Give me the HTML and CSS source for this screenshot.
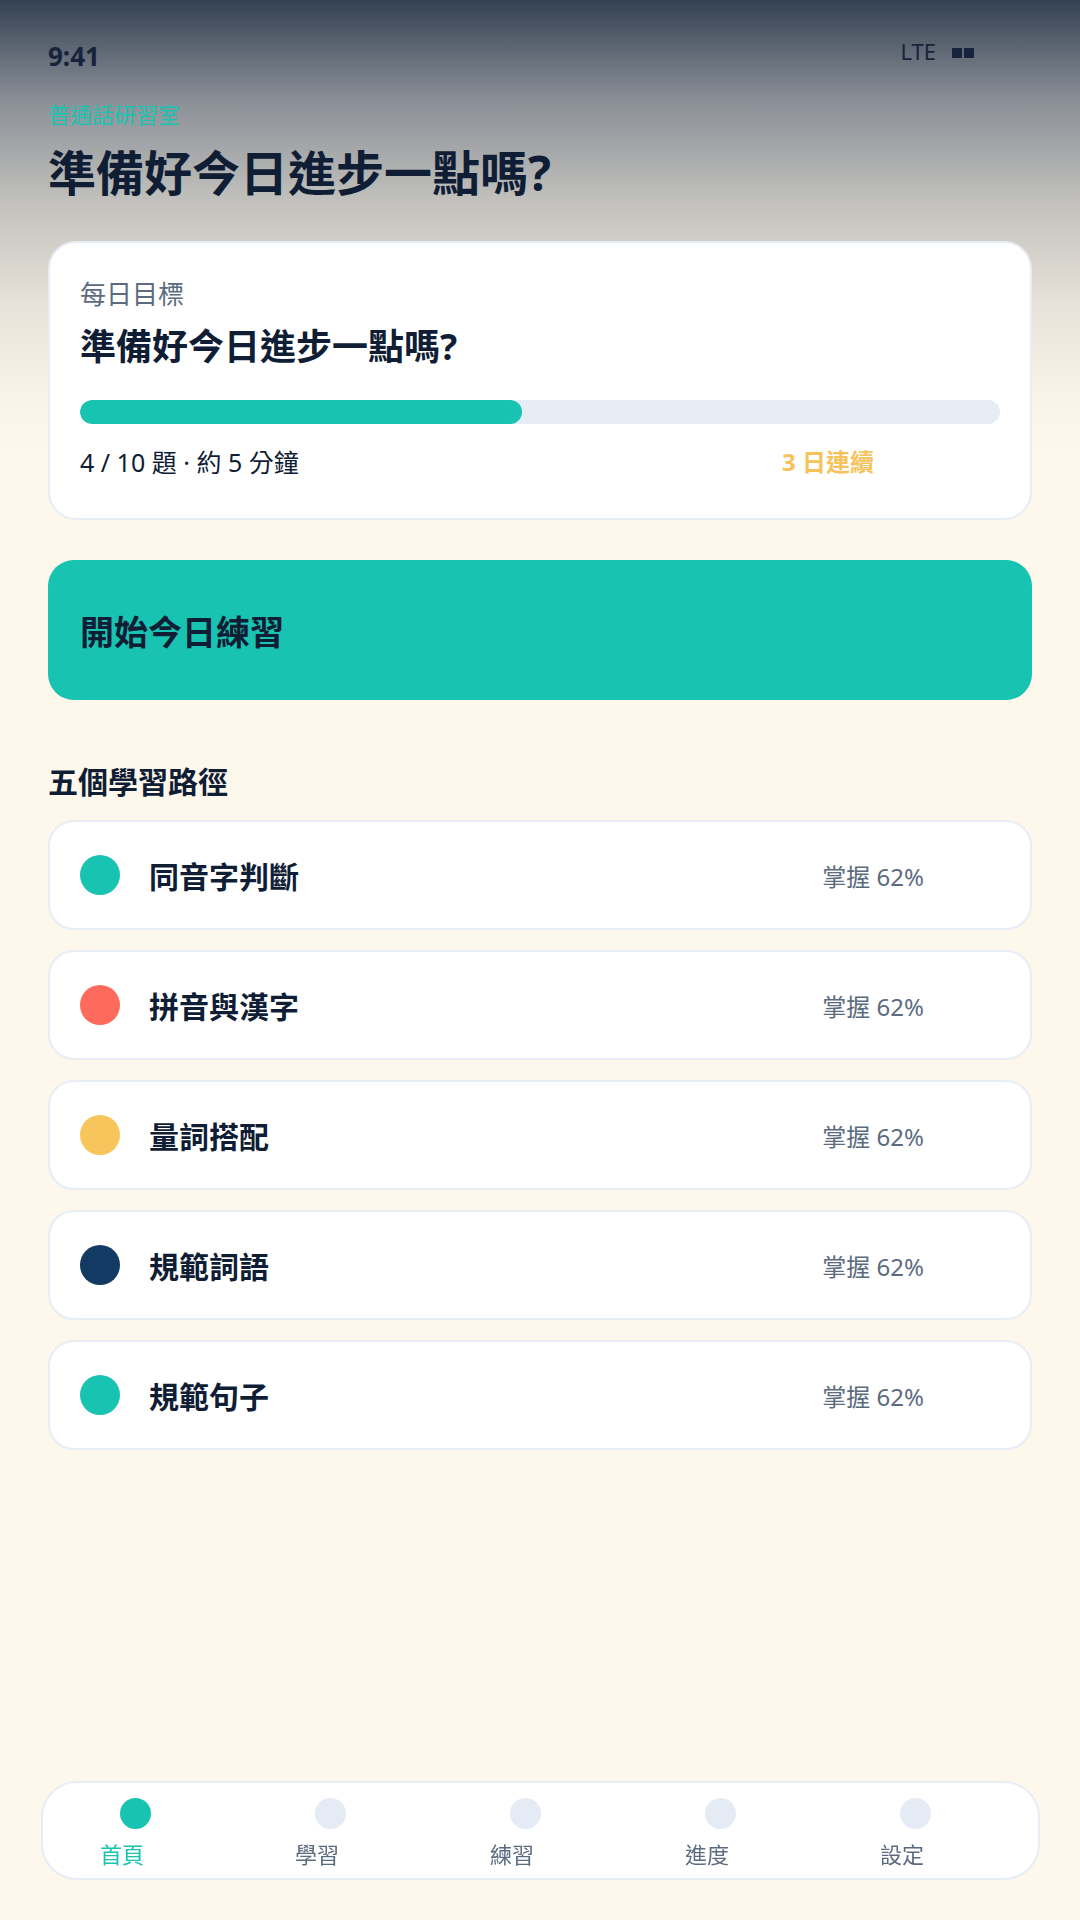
FILE: index.html
```html
<!DOCTYPE html>
<html lang="zh-Hant">
<head>
    <meta charset="UTF-8">
    <meta name="viewport" content="width=device-width, initial-scale=1.0">
    <title>普通話研習室</title>
    <link rel="stylesheet" href="styles.css">
</head>
<body>
    <div class="page">
        <div class="status-bar">
            <span class="time">9:41</span>
            <span class="signal">LTE <span class="bars"><i></i><i></i></span></span>
        </div>

        <p class="brand">普通話研習室</p>
        <h1 class="headline">準備好今日進步一點嗎?</h1>

        <section class="goal-card">
            <p class="goal-label">每日目標</p>
            <h2 class="goal-title">準備好今日進步一點嗎?</h2>
            <div class="progress">
                <div class="progress-fill" style="width: 48%;"></div>
            </div>
            <div class="goal-meta">
                <span>4 / 10 題 · 約 5 分鐘</span>
                <span class="streak">3 日連續</span>
            </div>
        </section>

        <button class="start-btn">開始今日練習</button>

        <h3 class="section-title">五個學習路徑</h3>
        <ul class="paths">
            <li class="path">
                <span class="dot teal"></span>
                <span class="path-name">同音字判斷</span>
                <span class="path-score">掌握 62%</span>
            </li>
            <li class="path">
                <span class="dot coral"></span>
                <span class="path-name">拼音與漢字</span>
                <span class="path-score">掌握 62%</span>
            </li>
            <li class="path">
                <span class="dot amber"></span>
                <span class="path-name">量詞搭配</span>
                <span class="path-score">掌握 62%</span>
            </li>
            <li class="path">
                <span class="dot navy"></span>
                <span class="path-name">規範詞語</span>
                <span class="path-score">掌握 62%</span>
            </li>
            <li class="path">
                <span class="dot teal"></span>
                <span class="path-name">規範句子</span>
                <span class="path-score">掌握 62%</span>
            </li>
        </ul>
    </div>

    <nav class="tab-bar">
        <a class="tab active"><span class="tab-dot"></span><span class="tab-label">首頁</span></a>
        <a class="tab"><span class="tab-dot"></span><span class="tab-label">學習</span></a>
        <a class="tab"><span class="tab-dot"></span><span class="tab-label">練習</span></a>
        <a class="tab"><span class="tab-dot"></span><span class="tab-label">進度</span></a>
        <a class="tab"><span class="tab-dot"></span><span class="tab-label">設定</span></a>
    </nav>
</body>
</html>
```

FILE: styles.css
```css
body {
    margin: 0;
    min-height: 1920px;
    font-family: "Noto Sans", "Noto Sans CJK TC", sans-serif;
    color: #0f1d35;
    background: linear-gradient(180deg, #334152 0px, #8a8f97 100px, #c1c0bc 200px, #e6e1d8 300px, #faf3e8 400px, #fef7ec 460px) no-repeat, #fef7ec;
}

.page {
    padding: 0 48px;
}

.status-bar {
    display: flex;
    justify-content: space-between;
    align-items: center;
    padding: 38px 58px 0 0;
    height: 36px;
    color: #17233a;
}

.time {
    font-size: 26px;
    font-weight: 700;
}

.signal {
    display: flex;
    align-items: center;
    margin-bottom: 10px;
    font-size: 22px;
}

.bars {
    display: flex;
    gap: 2px;
    margin-left: 16px;
    margin-top: 4px;
}

.bars i {
    width: 10px;
    height: 10px;
    background-color: #17233a;
}

.brand {
    margin: 25px 0 0;
    font-size: 22px;
    line-height: 30px;
    color: #19c3b1;
}

.headline {
    margin: 12px 0 0;
    font-size: 48px;
    line-height: 64px;
    font-weight: 700;
}

.goal-card {
    margin-top: 36px;
    padding: 33px 30px 39px;
    background-color: #fff;
    border: 2px solid #e6edf5;
    border-radius: 28px;
}

.goal-label {
    margin: 0;
    font-size: 26px;
    line-height: 36px;
    color: #5b6b80;
}

.goal-title {
    margin: 9px 0 0;
    font-size: 36px;
    line-height: 52px;
    font-weight: 700;
}

.progress {
    margin-top: 27px;
    height: 24px;
    border-radius: 12px;
    background-color: #e6edf5;
    overflow: hidden;
}

.progress-fill {
    height: 100%;
    border-radius: 12px;
    background-color: #19c3b1;
}

.goal-meta {
    display: flex;
    justify-content: space-between;
    margin-top: 21px;
    font-size: 25px;
    line-height: 34px;
}

.streak {
    margin-right: 126px;
    font-size: 24px;
    font-weight: 700;
    color: #f6c35a;
}

.start-btn {
    display: flex;
    align-items: center;
    width: 100%;
    height: 140px;
    margin-top: 40px;
    padding: 0 32px;
    border: none;
    border-radius: 26px;
    background-color: #19c3b1;
    font-family: inherit;
    font-size: 34px;
    font-weight: 700;
    color: #0f1d35;
    cursor: pointer;
}

.section-title {
    margin: 62px 0 0;
    font-size: 30px;
    line-height: 40px;
    font-weight: 700;
}

.paths {
    list-style: none;
    margin: 18px 0 0;
    padding: 0;
    display: flex;
    flex-direction: column;
    gap: 20px;
}

.path {
    display: flex;
    align-items: center;
    height: 110px;
    box-sizing: border-box;
    padding: 0 30px;
    background-color: #fff;
    border: 2px solid #e6edf5;
    border-radius: 26px;
}

.dot {
    width: 40px;
    height: 40px;
    border-radius: 50%;
    flex-shrink: 0;
}

.teal { background-color: #19c3b1; }
.coral { background-color: #fe6a5c; }
.amber { background-color: #f7c55b; }
.navy { background-color: #123a62; }

.path-name {
    flex: 1;
    margin-left: 29px;
    font-size: 30px;
    font-weight: 700;
}

.path-score {
    margin-right: 76px;
    font-size: 24px;
    color: #5b6b80;
}

.tab-bar {
    position: fixed;
    left: 41px;
    right: 40px;
    bottom: 40px;
    height: 99px;
    box-sizing: border-box;
    display: flex;
    gap: 151px;
    padding: 15px 0 0 57px;
    background-color: #fff;
    border: 2px solid #e6edf5;
    border-radius: 36px;
}

.tab {
    display: flex;
    flex-direction: column;
    align-items: flex-start;
    width: 44px;
    text-decoration: none;
}

.tab-dot {
    width: 31px;
    height: 31px;
    margin-left: 20px;
    border-radius: 50%;
    background-color: #e4ebf4;
}

.tab-label {
    margin-top: 10px;
    font-size: 22px;
    line-height: 30px;
    white-space: nowrap;
    color: #5b6b80;
}

.tab.active .tab-dot {
    background-color: #19c3b1;
}

.tab.active .tab-label {
    color: #19c3b1;
}
```
